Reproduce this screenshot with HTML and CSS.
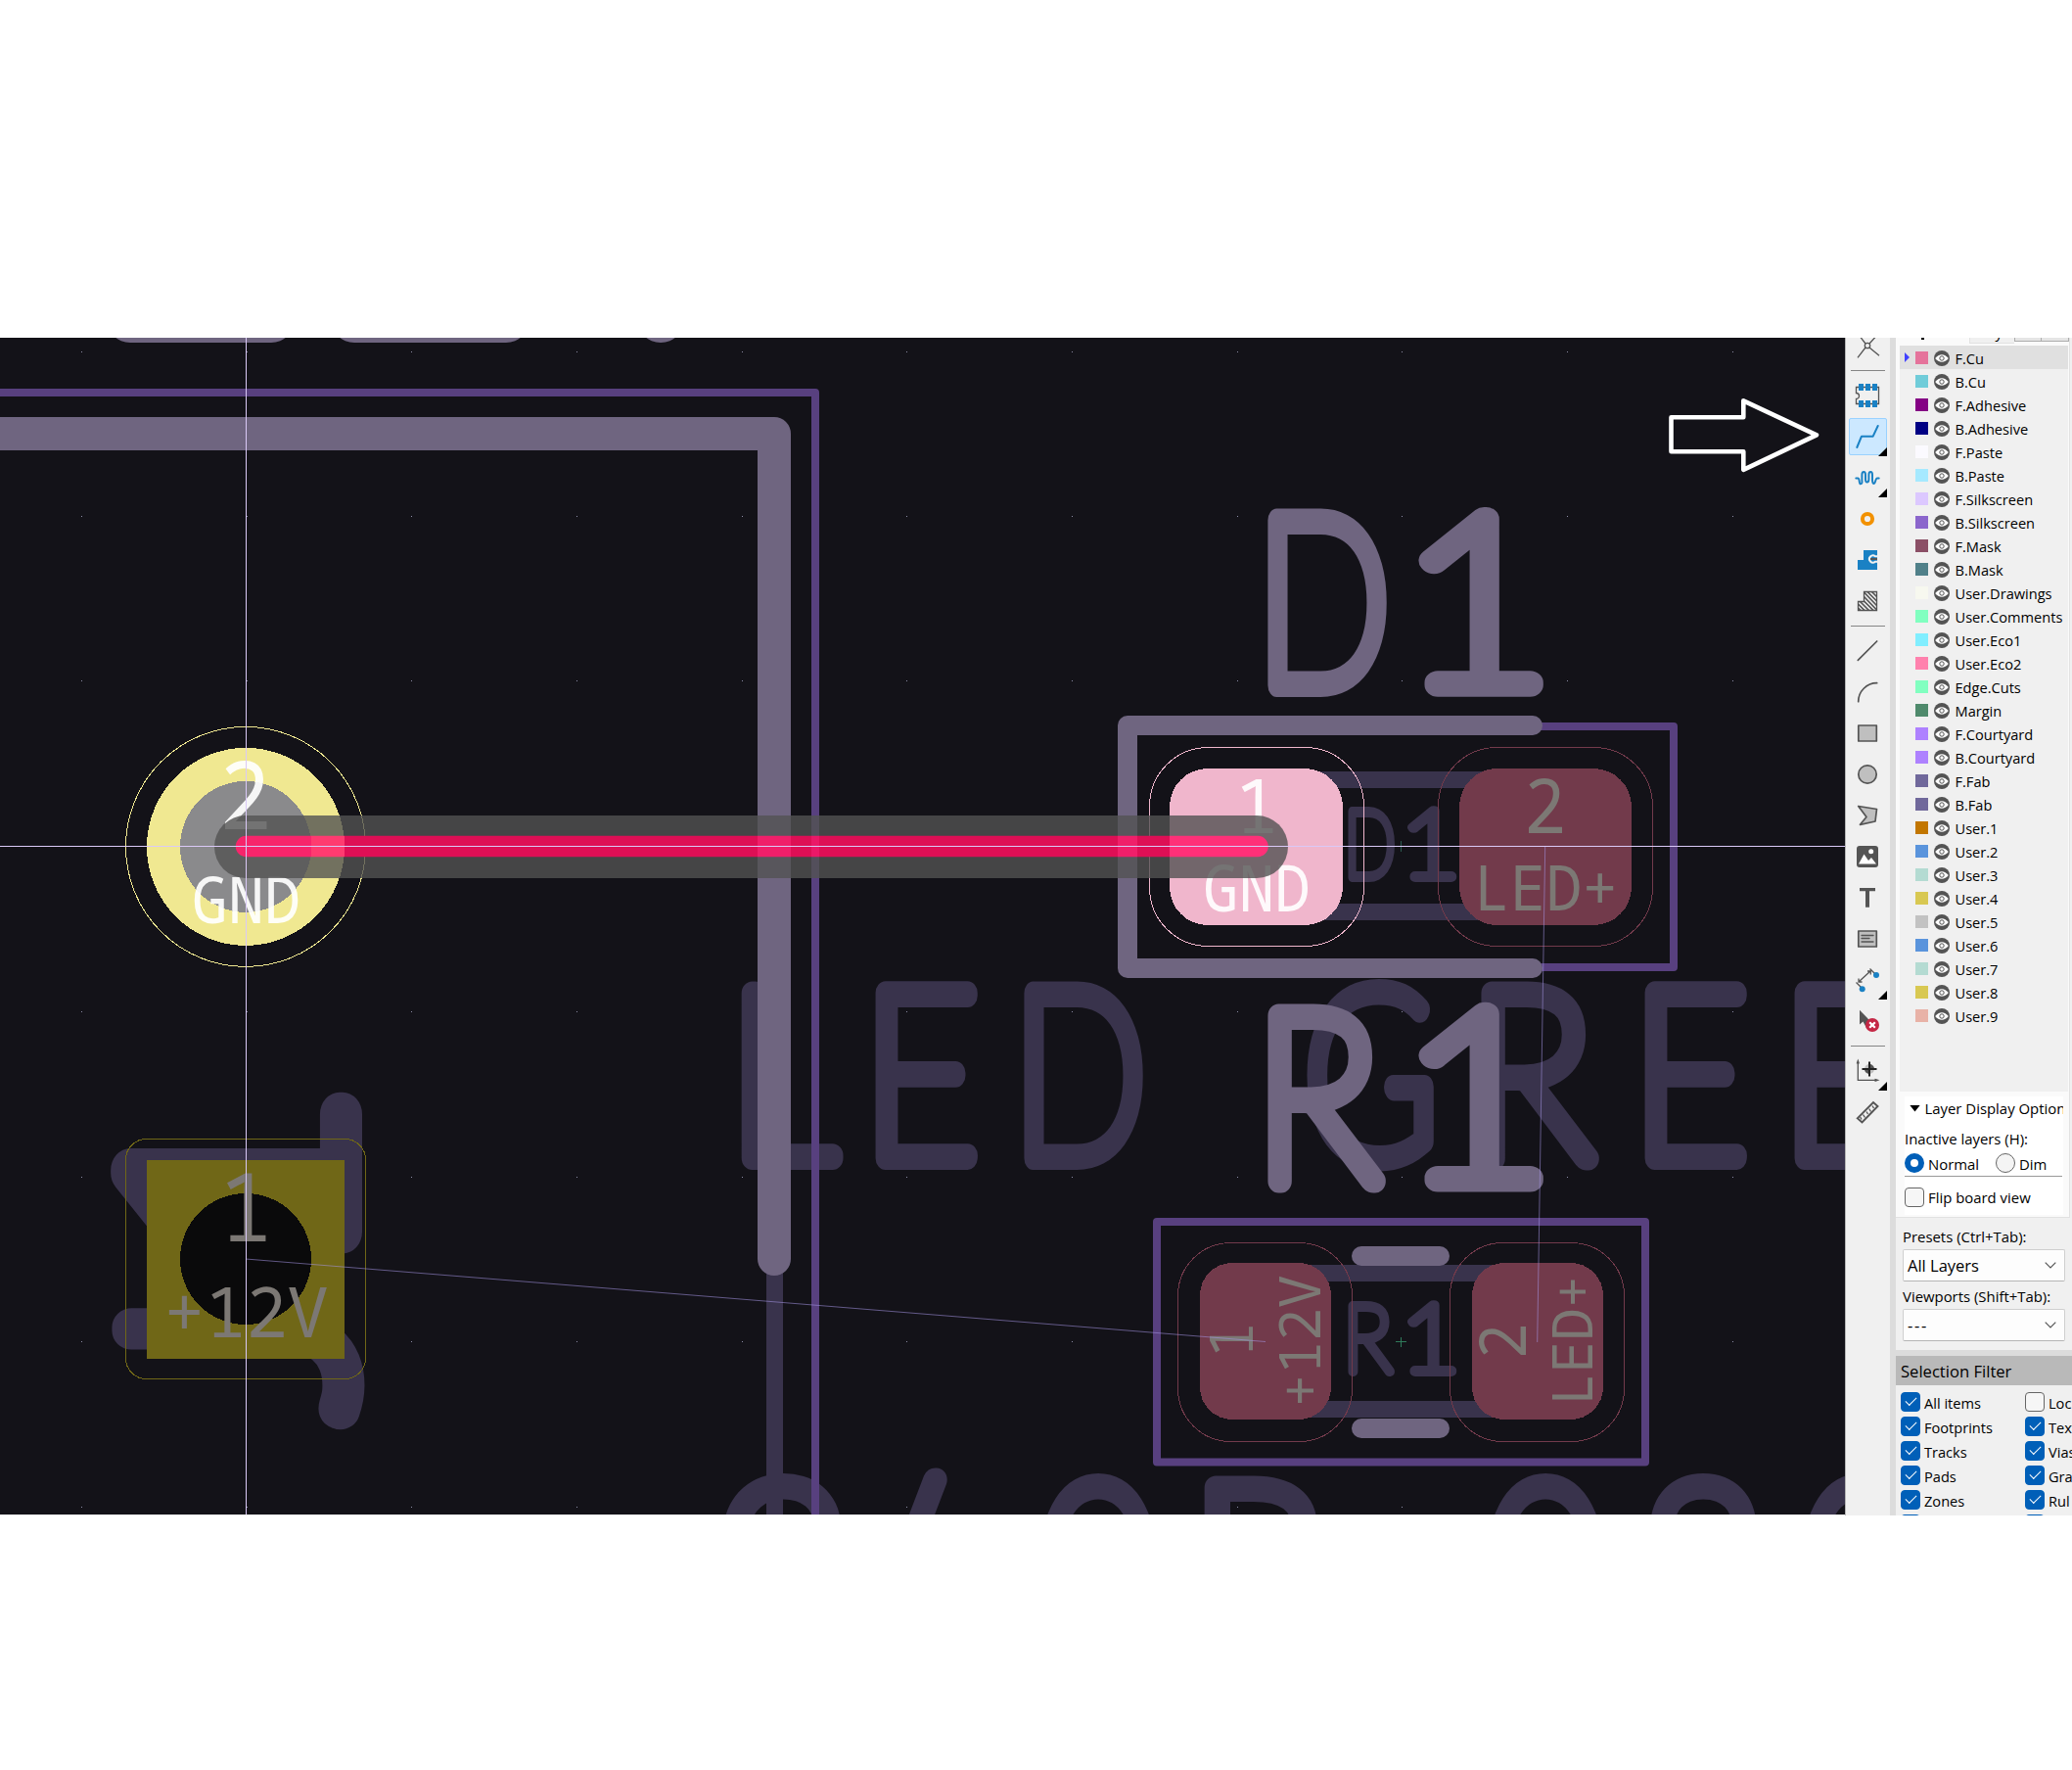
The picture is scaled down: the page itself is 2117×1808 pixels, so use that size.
FILE: index.html
```html
<!DOCTYPE html>
<html lang="en">
<head>
<meta charset="utf-8">
<title>PCB Editor</title>
<link rel="stylesheet" href="styles.css">
</head>
<body>
<svg class="defs" aria-hidden="true">
  <symbol id="eye" viewBox="0 0 16 16">
    <circle cx="8" cy="8" r="8" fill="#545454"/>
    <path d="M1.2 8Q4.200 4.200 8 4.200T14.800 8Q11.800 11.800 8 11.800T1.200 8Z" fill="#fff"/>
    <circle cx="8" cy="8" r="2.200" fill="#fff" stroke="#545454" stroke-width="1"/>
  </symbol>
</svg>
<main class="app">
  <svg class="board" viewBox="0 345 1885 1202" width="1885" height="1202">
    <defs>
      <linearGradient id="track" gradientUnits="userSpaceOnUse" x1="0" y1="0" x2="1885" y2="0">
        <stop offset="0" stop-color="#f7256b"/><stop offset=".1687" stop-color="#f7256b"/>
        <stop offset=".1687" stop-color="#ff3b70"/><stop offset=".1867" stop-color="#ff3b70"/>
        <stop offset=".1867" stop-color="#de0f55"/><stop offset=".4106" stop-color="#de0f55"/>
        <stop offset=".4106" stop-color="#f01f6a"/><stop offset=".4286" stop-color="#f01f6a"/>
        <stop offset=".4286" stop-color="#de0f55"/><stop offset=".4398" stop-color="#de0f55"/>
        <stop offset=".4398" stop-color="#eb1868"/><stop offset=".444" stop-color="#eb1868"/>
        <stop offset=".444" stop-color="#de0f55"/><stop offset=".6058" stop-color="#de0f55"/>
        <stop offset=".6058" stop-color="#f01f6a"/><stop offset=".6164" stop-color="#f01f6a"/>
        <stop offset=".6164" stop-color="#de0f55"/><stop offset=".634" stop-color="#de0f55"/>
        <stop offset=".634" stop-color="#ff3078"/><stop offset="1" stop-color="#ff3078"/>
      </linearGradient>
    </defs>
    <g class="grid">
      <path d="M83 359.500H1885M83 527.500H1885M83 695.500H1885M83 1033.500H1885M83 1202.500H1885M83 1370.500H1885M83 1539.500H1885"/>
    </g>

    <!-- fabrication layer -->
    <g class="fab-text">
      <text class="w40" transform="translate(350 1307) rotate(-90) scale(1.120 1)">1</text>
      <text class="w40" transform="translate(350 1445) rotate(-90) scale(.97 1)">J</text>
      <text transform="translate(743 1182.600) scale(.92 1)">L</text>
      <text transform="translate(881 1182.600) scale(.85 1)">E</text>
      <text transform="translate(1034.400 1182.600) scale(.747 1)">D</text>
      <text transform="translate(1332 1182.600) scale(.769 1)">G</text>
      <text transform="translate(1499 1182.600) scale(.906 1)">R</text>
      <text transform="translate(1667 1182.600) scale(.85 1)">E</text>
      <text transform="translate(1820 1182.600) scale(.85 1)">E</text>
      <text transform="translate(730 1688) scale(1 1)">2</text>
      <text transform="translate(875 1685) scale(.9 1)">/</text>
      <text transform="translate(1063 1688) scale(.846 1)">0</text>
      <text transform="translate(1215 1688) scale(.98 1)">R</text>
      <text transform="translate(1520 1688) scale(.846 1)">0</text>
      <text transform="translate(1676 1688) scale(.92 1)">8</text>
      <text transform="translate(1842 1688) scale(.846 1)">0</text>
      <text class="w10" transform="translate(1373 896) scale(.73 1)">D</text>
      <text class="w10" transform="translate(1431 896) scale(1.100 1)">1</text>
      <text class="w10" transform="translate(1372 1401) scale(.89 1)">R</text>
      <text class="w10" transform="translate(1431 1401) scale(1.100 1)">1</text>
    </g>
    <path class="fab" d="M791.500 1286V1547M1275 796.500H1590M1275 931.500H1590M1320 1300.500H1540M1320 1439.500H1540"/>

    <!-- courtyards -->
    <path class="courtyard" d="M0 401H833V1547M1566 742H1710V988H1566M1182 1248H1681V1493.500H1182Z"/>

    <!-- silkscreen -->
    <path class="silk s48" d="M133 326H277M362 326H517M675 326H675.100"/>
    <path class="silk s34" d="M0 443H791V1286"/>
    <path class="silk s20" d="M1566 741H1152V989H1566M1391 1283H1471M1391 1459H1471"/>
    <g class="silk-text">
      <text transform="translate(1283.400 699.700) scale(.747 1)">D</text>
      <text transform="translate(1430.600 699.700) scale(1.125 1)">1</text>
      <text transform="translate(1281 1205.500) scale(.906 1)">R</text>
      <text transform="translate(1430.600 1205.500) scale(1.125 1)">1</text>
    </g>

    <!-- pads -->
    <g class="shape">
      <circle cx="251" cy="864.900" r="101" fill="#f0e891"/>
      <circle cx="251" cy="864.900" r="67" fill="#8a8a8c"/>
      <circle cx="251" cy="864.900" r="122.500" fill="none" stroke="#f0e891"/>
      <rect x="150" y="1185" width="202" height="203" fill="#706717"/>
      <circle cx="251" cy="1286" r="67" fill="#0a0a0b"/>
      <rect x="128.500" y="1163.500" width="245" height="245" rx="21" fill="none" stroke="#706717"/>
      <rect x="1195" y="785" width="177" height="160" rx="39" fill="#f0b6cc"/>
      <rect x="1491" y="785" width="176" height="160" rx="39" fill="#723a4b"/>
      <rect x="1226" y="1290" width="134" height="160" rx="33" fill="#723a4b"/>
      <rect x="1504" y="1290" width="134" height="160" rx="33" fill="#723a4b"/>
      <rect x="1174.500" y="763.500" width="219" height="203" rx="60" fill="none" stroke="#f0b6cc"/>
      <rect x="1469.500" y="763.500" width="219" height="203" rx="60" fill="none" stroke="#723a4b"/>
      <rect x="1203.500" y="1269.500" width="178" height="203" rx="54" fill="none" stroke="#723a4b"/>
      <rect x="1481.500" y="1269.500" width="178" height="203" rx="54" fill="none" stroke="#723a4b"/>
    </g>
    <g class="pad-text bright">
      <text font-size="97" transform="translate(250.500 847) scale(.92 1)">2</text>
      <text font-size="66" transform="translate(251.500 943) scale(.935 1)">GND</text>
      <text font-size="77" transform="translate(1284 851) scale(.97 1)">1</text>
      <text font-size="65" transform="translate(1284 930.500) scale(.935 1)">GND</text>
    </g>
    <g class="pad-text">
      <text font-size="96" transform="translate(251 1268) scale(.97 1)">1</text>
      <text font-size="72" transform="translate(251.500 1366) scale(.975 1)">+12V</text>
      <text font-size="77" transform="translate(1578.500 851) scale(.93 1)">2</text>
      <text font-size="64" transform="translate(1579.500 930) scale(.96 1)">LED+</text>
      <text font-size="62" transform="translate(1280 1369) rotate(-90)">1</text>
      <text font-size="57.500" transform="translate(1349 1370) rotate(-90) scale(.98 1)">+12V</text>
      <text font-size="65" transform="translate(1559 1370) rotate(-90) scale(.94 1)">2</text>
      <text font-size="57" transform="translate(1627 1369.500) rotate(-90) scale(.97 1)">LED+</text>
    </g>

    <!-- anchors and ratsnest -->
    <path class="anchor dim" d="M1431.500 859V870"/>
    <path class="anchor" d="M1431.500 1366V1376M1426 1370.500H1437"/>
    <path class="rats" d="M251 1286L1293 1370.500M1578.700 865L1570.700 1371"/>

    <!-- track being routed -->
    <path class="clearance" d="M251 865H1284"/>
    <path class="route" d="M251.500 864.500H1285V864.510"/>
    <path class="cursor" d="M251.500 345V1547M0 864.500H1885"/>

    <path class="pointer" d="M1707.500 426.300H1781.300V409.300L1856 444.300L1781.300 479.800V461.300H1707.500Z"/>
  </svg>

  <nav class="tools">
    <div class="tool"><svg viewBox="0 0 24 24" class="ln"><path d="M2 24.300L10 14M24 22.300L14 14M0-3L10 10M24-1L14 10"/><circle cx="12" cy="12" r="2.700"/></svg></div>
    <hr>
    <div class="tool"><svg viewBox="0 0 24 24" class="ln"><path d="M.5 3.500H23.500V20.500H.5V15.500A3 3 0 0 0 .5 9.500Z"/><path class="bf" d="M3 0h5v7H3zM10 0h5v7h-5zM17 0h5v7h-5zM3 17h5v7H3zM10 17h5v7h-5zM17 17h5v7h-5z"/></svg></div>
    <div class="tool active more"><svg viewBox="0 0 24 24"><path class="bl" d="M1.300 23L6 11.700H17.700L22.700 1"/></svg></div>
    <div class="tool more"><svg viewBox="0 0 24 24"><path class="bl" d="M.3 12.500H2.200C4.500 12.500 3 18.300 5 18.300S6.400 16 6.400 14V9C6.400 7 7 6 8.200 6S10 7 10 9V13.500C10 15.500 10.500 16.500 11.700 16.500S13.400 15.500 13.400 13.500V9C13.400 7 14 6 15.200 6S17 7 17 9V14C17 16 17.300 18 18.800 18S20 12.500 22 12.500H23.700"/></svg></div>
    <div class="tool"><svg viewBox="0 0 24 24"><circle cx="12" cy="12" r="5.100" fill="none" stroke="#f29100" stroke-width="4"/></svg></div>
    <div class="tool"><svg viewBox="0 0 24 24"><path class="bf" d="M8 2H22V22H2V12H8Z"/><path d="M22 8.300H20A3.600 3.600 0 1 0 20 13.700H22" fill="none" stroke="#f0f0f0" stroke-width="2"/><path d="M15 11H22" stroke="#545454" stroke-width="2"/></svg></div>
    <div class="tool"><svg viewBox="0 0 24 24" class="ln"><path d="M8.500 2.500H21.500V21.500H2.500V12.500H8.500Z"/><path stroke-width="1.700" d="M12 2.500L21.500 12M16.500 2.500L21.500 7.500M8.500 3L21.500 16.500M8.500 7.500L21.500 21M8.500 12L18 21.500M4.500 12.500L13.500 21.500M2.500 15L9 21.500M2.500 19L5 21.500"/></svg></div>
    <hr>
    <div class="tool"><svg viewBox="0 0 24 24" class="ln w2"><path d="M2.300 21.300L21.700 2"/></svg></div>
    <div class="tool"><svg viewBox="0 0 24 24" class="ln w2"><path d="M2.700 21.700A19 19 0 0 1 21.700 2.700"/></svg></div>
    <div class="tool"><svg viewBox="0 0 24 24" class="ln w2 gr"><rect x="2.800" y="4" width="18.500" height="16"/></svg></div>
    <div class="tool"><svg viewBox="0 0 24 24" class="ln w2 gr"><circle cx="12" cy="12" r="9.200"/></svg></div>
    <div class="tool"><svg viewBox="0 0 24 24" class="ln w2 gr"><path d="M2.700 2.500L21.500 5.500L20 18L4.500 21.300L11 13.500Z"/></svg></div>
    <div class="tool"><svg viewBox="0 0 24 24"><rect x="1" y="1" width="22" height="22" rx="3" fill="#545454"/><circle cx="15.700" cy="6.700" r="2.500" fill="#fff"/><path d="M3 19.500L8.500 9.500L13 16L16 13L21 19.500Z" fill="#fff"/></svg></div>
    <div class="tool"><svg viewBox="0 0 24 24"><path d="M4 2H20V5.300H14V21.700H10V5.300H4Z" fill="#545454"/></svg></div>
    <div class="tool"><svg viewBox="0 0 24 24" class="ln w2 gr"><rect x="2.800" y="4" width="18.500" height="16"/><path stroke-width="1.300" d="M6 8.500H18M6 11.500H14M6 15H18"/></svg></div>
    <div class="tool more"><svg viewBox="0 0 24 24" class="ln"><path d="M3.500 13.500L15 3M.5 14.500L6 20M14.500.5L19.500 5.500M3 10.500V14H6.500M12 3H15.300V6.500"/><circle class="bf" cx="21" cy="7" r="3"/><circle class="bf" cx="6.700" cy="21.300" r="3"/></svg></div>
    <div class="tool"><svg viewBox="0 0 24 24"><path d="M4 .7V15.500L7.500 12.500L11 19L14 12L12.500 9.500Z" fill="#545454"/><circle cx="17" cy="16" r="7" fill="#c42745"/><path d="M14.200 13.200L19.800 18.800M19.800 13.200L14.200 18.800" stroke="#fff" stroke-width="2.200"/></svg></div>
    <hr>
    <div class="tool more"><svg viewBox="0 0 24 24" class="ln"><path d="M2.300 3V21.300H21M1.300 4.500L2.300 1.500L3.300 4.500M19.500 20.300L22.500 21.300L19.500 22.300"/><circle cx="14" cy="10" r="5" fill="#bfbfbf" stroke="none"/><path d="M14 10V5A5 5 0 0 1 19 10ZM14 10V15A5 5 0 0 1 9 10Z" fill="#545454" stroke="none"/><path d="M14 2.500V17.500M6.500 10H21.500" stroke="#222" stroke-width="2"/></svg></div>
    <div class="tool"><svg viewBox="0 0 24 24" class="ln"><path stroke-width="1.900" d="M1.700 18.300L18 2L22.500 6L6.500 22.500Z"/><path d="M6 19.500L4.700 17M9.500 17.500L7.500 14.500M12.500 14L11 11.500M15.500 11.500L13.700 8.500M18.500 8L17 5.500"/></svg></div>
  </nav>

  <aside class="side">
    <section class="layers">
      <div class="tabs"><span class="tab-cut"></span><span class="tab2"><i>y</i></span><span class="btns"></span></div>
      <ul class="list">
        <li class="sel"><b style="background:#e5739b"></b><svg><use href="#eye"/></svg>F.Cu</li>
        <li><b style="background:#70ccd9"></b><svg><use href="#eye"/></svg>B.Cu</li>
        <li><b style="background:#840084"></b><svg><use href="#eye"/></svg>F.Adhesive</li>
        <li><b style="background:#000084"></b><svg><use href="#eye"/></svg>B.Adhesive</li>
        <li><b style="background:#fbfaff"></b><svg><use href="#eye"/></svg>F.Paste</li>
        <li><b style="background:#a6e9ff"></b><svg><use href="#eye"/></svg>B.Paste</li>
        <li><b style="background:#dcc8ff"></b><svg><use href="#eye"/></svg>F.Silkscreen</li>
        <li><b style="background:#8b66cc"></b><svg><use href="#eye"/></svg>B.Silkscreen</li>
        <li><b style="background:#8b4f66"></b><svg><use href="#eye"/></svg>F.Mask</li>
        <li><b style="background:#508089"></b><svg><use href="#eye"/></svg>B.Mask</li>
        <li><b style="background:#f7f8ef"></b><svg><use href="#eye"/></svg>User.Drawings</li>
        <li><b style="background:#81ffc0"></b><svg><use href="#eye"/></svg>User.Comments</li>
        <li><b style="background:#81eeff"></b><svg><use href="#eye"/></svg>User.Eco1</li>
        <li><b style="background:#ff81ad"></b><svg><use href="#eye"/></svg>User.Eco2</li>
        <li><b style="background:#81ffc0"></b><svg><use href="#eye"/></svg>Edge.Cuts</li>
        <li><b style="background:#4f8a6c"></b><svg><use href="#eye"/></svg>Margin</li>
        <li><b style="background:#ae81ff"></b><svg><use href="#eye"/></svg>F.Courtyard</li>
        <li><b style="background:#ae81ff"></b><svg><use href="#eye"/></svg>B.Courtyard</li>
        <li><b style="background:#70689b"></b><svg><use href="#eye"/></svg>F.Fab</li>
        <li><b style="background:#70689b"></b><svg><use href="#eye"/></svg>B.Fab</li>
        <li><b style="background:#c27600"></b><svg><use href="#eye"/></svg>User.1</li>
        <li><b style="background:#5a94dc"></b><svg><use href="#eye"/></svg>User.2</li>
        <li><b style="background:#b4dbd2"></b><svg><use href="#eye"/></svg>User.3</li>
        <li><b style="background:#d8c852"></b><svg><use href="#eye"/></svg>User.4</li>
        <li><b style="background:#c2c2c2"></b><svg><use href="#eye"/></svg>User.5</li>
        <li><b style="background:#5a94dc"></b><svg><use href="#eye"/></svg>User.6</li>
        <li><b style="background:#b4dbd2"></b><svg><use href="#eye"/></svg>User.7</li>
        <li><b style="background:#d8c852"></b><svg><use href="#eye"/></svg>User.8</li>
        <li><b style="background:#e8b2a7"></b><svg><use href="#eye"/></svg>User.9</li>
      </ul>
      <div class="display">
        <div class="head"><i class="tri"></i>Layer Display Option</div>
        <div class="lbl">Inactive layers (H):</div>
        <div class="radios"><i class="radio on"></i><span>Normal</span><i class="radio"></i><span>Dim</span></div>
        <div class="flip"><i class="box"></i>Flip board view</div>
      </div>
    </section>
    <section class="presets">
      <label>Presets (Ctrl+Tab):</label>
      <div class="select">All Layers<svg viewBox="0 0 12 7"><path d="M.7 .7L6 6L11.300 .7"/></svg></div>
      <label>Viewports (Shift+Tab):</label>
      <div class="select"><span class="dashes">---</span><svg viewBox="0 0 12 7"><path d="M.7 .7L6 6L11.300 .7"/></svg></div>
    </section>
    <section class="filter">
      <h2>Selection Filter</h2>
      <div class="checks">
        <div><i class="box on"></i>All items</div><div><i class="box"></i>Loc</div>
        <div><i class="box on"></i>Footprints</div><div><i class="box on"></i>Text</div>
        <div><i class="box on"></i>Tracks</div><div><i class="box on"></i>Vias</div>
        <div><i class="box on"></i>Pads</div><div><i class="box on"></i>Gra</div>
        <div><i class="box on"></i>Zones</div><div><i class="box on"></i>Rul</div>
        <div><i class="box on"></i></div><div><i class="box on"></i></div>
      </div>
    </section>
  </aside>
</main>
</body>
</html>
```
FILE: styles.css
```css
* { box-sizing: border-box; }
body { margin: 0; padding-top: 345px; height: 1808px; background: #fff; overflow: hidden; font-family: "Open Sans", "Noto Sans", sans-serif; font-size: 14.9px; color: #000; }
.defs { display: none; }
.app { display: flex; width: 2117px; height: 1202.500px; overflow: hidden; background: #f0f0f0; }

.board { flex: none; display: block; background: #131218; }
.grid { stroke: #8c8ca6; fill: none; shape-rendering: crispEdges; stroke-width: 1; stroke-dasharray: 1 167.650; }
.fab-text text, .silk-text text { font-family: Lato, sans-serif; font-weight: 100; font-size: 241px; stroke-width: 24px; stroke-linejoin: round; stroke-linecap: round; }
.fab-text { fill: #39334c; stroke: #39334c; }
.fab-text text.w40 { font-size: 308px; stroke-width: 40px; }
.fab-text text.w10 { font-size: 96px; stroke-width: 10px; }
.silk-text { fill: #6f6580; stroke: #6f6580; }
.fab { fill: none; stroke: #39334c; stroke-width: 17; }
.courtyard { fill: none; stroke: #58407f; stroke-width: 8; stroke-linejoin: round; }
.silk { fill: none; stroke: #6f6580; stroke-linejoin: round; stroke-linecap: round; }
.s48 { stroke-width: 48; }
.s34 { stroke-width: 34; }
.s20 { stroke-width: 20; }
.shape { shape-rendering: crispEdges; }
.pad-text { font-family: "Noto Sans Mono", monospace; text-anchor: middle; fill: #7c7874; }
.bright { fill: rgba(255, 255, 255, .92); }
.anchor { stroke: #2f7a5a; fill: none; shape-rendering: crispEdges; }
.dim { stroke: #2b5a4f; }
.rats { stroke: rgba(165, 150, 230, .55); fill: none; }
.clearance { stroke: rgba(83, 83, 83, .8); stroke-width: 64; stroke-linecap: round; fill: none; }
.route { stroke: url(#track); stroke-width: 21.500; stroke-linecap: round; stroke-linejoin: round; fill: none; }
.cursor { stroke: #dac9f7; fill: none; shape-rendering: crispEdges; }
.pointer { fill: none; stroke: #fff; stroke-width: 4.600; stroke-linejoin: round; }

.tools { flex: none; display: flex; flex-direction: column; width: 46px; margin-top: -13px; padding-left: 3px; border-left: 1px solid #b5b5b5; background: #f0f0f0; }
.tool { position: relative; flex: none; width: 39px; height: 38px; margin: 2px 0; display: flex; align-items: center; justify-content: center; }
.tool svg { width: 24px; height: 24px; margin-right: 1px; overflow: visible; }
.tools hr { flex: none; height: 1px; width: 35px; margin: 4px 0 4px 2px; border: 0; background: #858585; }
.active { background: #cce8ff; border: 1px solid #99d1ff; border-radius: 2px; }
.more::after { content: ""; position: absolute; right: 0; bottom: -1px; width: 9px; height: 9px; background: #000; clip-path: polygon(100% 0, 100% 100%, 0 100%); }
.active::after { right: -1px; bottom: -2px; }
.ln { fill: none; stroke: #545454; stroke-width: 1.300; }
.w2 { stroke-width: 1.700; stroke-linejoin: round; stroke-linecap: round; }
.gr { fill: #bfbfbf; }
.bf { fill: #1a81c4; stroke: none; }
.bl { fill: none; stroke: #1a81c4; stroke-width: 2; stroke-linecap: round; stroke-linejoin: round; }

.side { flex: 1; min-width: 0; border-left: 6px solid #dcdcdc; overflow: hidden; }
.layers { width: 178px; height: 899px; padding: 0 0 0 4px; border-right: 1px solid #e2e2e2; border-bottom: 1px solid #e2e2e2; background: #fafafa; overflow: hidden; }
.tabs { height: 8px; display: flex; overflow: hidden; font-size: 15px; }
.tab-cut { width: 71px; }
.tab-cut::before { content: ""; display: block; width: 3px; height: 2px; margin-left: 22px; background: #000; }
.tab2 { width: 47px; height: 6px; padding-left: 26px; line-height: 0; background: #f0f0f0; border-left: 1px solid #e2e2e2; border-bottom: 1px solid #e2e2e2; }
.tab2 i { display: block; font-style: normal; margin-top: -6px; }
.btns { width: 56px; height: 4px; background: linear-gradient(90deg, #adadad 1px, #e5e5e5 1px 27px, #adadad 27px 28px, #e5e5e5 28px 55px, #adadad 55px); border-bottom: 1px solid #adadad; }
.list { margin: 0; padding: 0; list-style: none; height: 762px; width: 172px; background: #f0f0f0; font-size: 14.600px; }
.list li { display: flex; align-items: center; height: 24px; padding: 2px 0 0 16px; line-height: 22px; }
.list b { width: 13px; height: 13px; margin: -2px 6px 0 0; }
.list svg { width: 16px; height: 16px; margin: -1px 5.500px 0 0; }
.list .sel { background: #e0e0e0; }
.sel::before { content: ""; width: 5px; height: 10px; margin: -2px 6px 0 -11px; background: #4040ff; clip-path: polygon(0 0, 100% 50%, 0 100%); }
.display { width: 162px; height: 121px; margin: 5px 0 0 5px; background: #fff; overflow: hidden; white-space: nowrap; }
.head { display: flex; align-items: center; height: 23px; padding-left: 5px; }
.tri { flex: none; width: 11px; height: 7px; margin: 1px 4.500px 0 0; background: #000; clip-path: polygon(0 0, 100% 0, 50% 100%); }
.lbl { height: 32px; line-height: 40px; }
.radios { display: flex; align-items: center; width: 161px; height: 27px; padding-bottom: 1px; border-bottom: 1px solid #999; }
.radio { flex: none; width: 20px; height: 20px; border: 1px solid #666; border-radius: 50%; background: #f4f4f4; margin-right: 4px; }
.radio.on { border: 6px solid #005fb8; background: #fff; margin-right: 4px; }
.radios span { flex: none; width: 69px; padding-top: 2px; }
.flip { display: flex; align-items: center; height: 42px; }
.flip .box { margin-right: 4px; }
.box { position: relative; flex: none; width: 20px; height: 20px; border: 1px solid #666; border-radius: 4px; background: #f6f6f6; margin-right: 4px; }
.box.on { background: #005fb8; border-color: #005fb8; }
.box.on::after { content: ""; display: block; width: 10px; height: 5px; margin: 4px 0 0 4px; border: solid #fff; border-width: 0 0 1px 1px; transform: rotate(-45deg); }
.presets { height: 135px; padding: 6px 0 0 7px; }
.presets label { display: block; height: 26px; line-height: 27px; white-space: nowrap; }
.presets .select + label { height: 28px; line-height: 30px; }
.select { display: flex; align-items: center; justify-content: space-between; width: 166px; height: 33px; padding: 0 8px 0 4px; border: 1px solid #cfcfcf; border-bottom-color: #b5b5b5; border-radius: 2px; background: #fdfdfd; font-size: 16.500px; }
.select svg { width: 12px; height: 7px; fill: none; stroke: #555; stroke-width: 1.200; }
.dashes { letter-spacing: 1.700px; }
.filter { border-top: 6px solid #dcdcdc; }
.filter h2 { margin: 0; height: 30px; padding-left: 5px; line-height: 31px; font-size: 16.600px; font-weight: 400; background: #b9b9b9; }
.checks { display: grid; grid-template-columns: 127px 100px; grid-auto-rows: 25px; padding: 4.500px 0 0 5px; font-size: 14.600px; }
.checks div { display: flex; align-items: center; padding-top: 1px; white-space: nowrap; }
.checks .box { margin-top: -1px; }
```
